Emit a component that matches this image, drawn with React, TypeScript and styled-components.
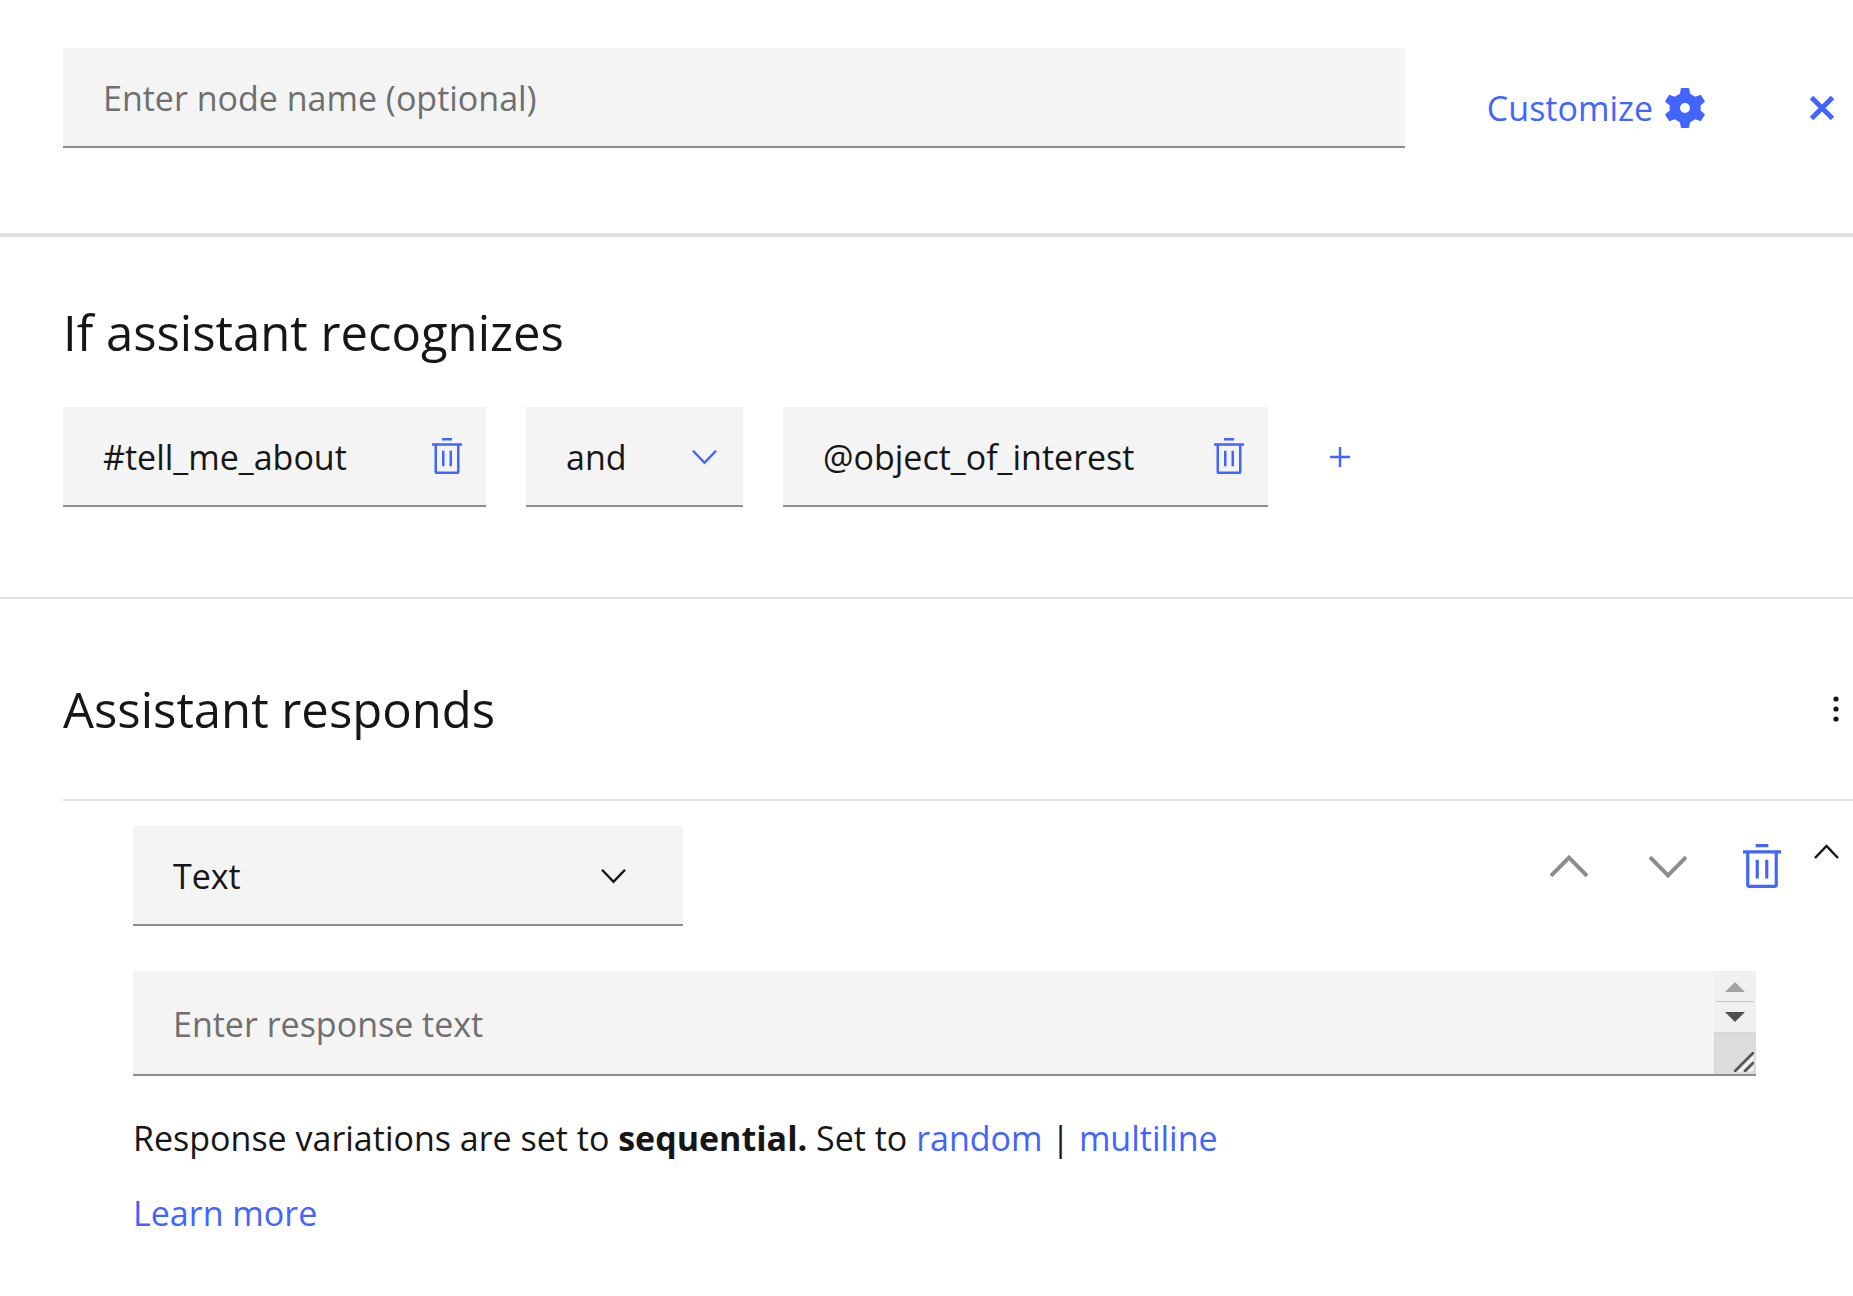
import React, { useState } from 'react';
import styled, { createGlobalStyle } from 'styled-components';

const color = {
  ink: '#161616',
  muted: '#6f6f6f',
  disabled: '#8d8d8d',
  field: '#f4f4f4',
  rule: '#e0e0e0',
  fieldRule: '#8d8d8d',
  action: '#4265ff',
};

const GlobalStyle = createGlobalStyle`
  *, *::before, *::after { box-sizing: border-box; }
  body {
    margin: 0;
    background: #ffffff;
    color: ${color.ink};
    font-family: "Open Sans", "Noto Sans", sans-serif;
    font-size: 34px;
    line-height: 44px;
  }
`;

const Panel = styled.main`
  display: flex;
  flex-direction: column;
`;

const Header = styled.header`
  display: flex;
  align-items: flex-start;
  padding: 48px 11px 65px 63px;
  border-bottom: 4px solid ${color.rule};
`;

const HeaderActions = styled.div`
  display: flex;
  align-items: center;
  gap: 97px;
  height: 120px;
  margin-left: 82px;
`;

const Section = styled.section`
  padding: 63px 0 90px 63px;
  border-bottom: 2px solid ${color.rule};
`;

const ResponseSection = styled.section`
  padding: 0 0 48px 63px;
`;

const SectionHeader = styled.div`
  display: flex;
  align-items: center;
  justify-content: space-between;
  height: 202px;
  padding: 20px 0 0;
  border-bottom: 2px solid ${color.rule};
`;

const Title = styled.h2`
  margin: 0;
  font-size: 49px;
  font-weight: 400;
  line-height: 64px;
`;

const TextField = styled.input`
  flex: 1;
  min-width: 0;
  height: 100px;
  padding: 2px 40px 0;
  border: 0;
  border-bottom: 2px solid ${color.fieldRule};
  border-radius: 0;
  background: ${color.field};
  color: ${color.ink};
  font: inherit;
  outline-color: ${color.action};
  &::placeholder { color: ${color.muted}; opacity: 1; }
`;

const IconButton = styled.button<{ $tone?: string }>`
  display: inline-flex;
  align-items: center;
  justify-content: center;
  flex: none;
  padding: 0;
  border: 0;
  background: none;
  color: ${(p) => p.$tone ?? color.action};
  font: inherit;
  cursor: pointer;
  svg { display: block; }
`;

const CustomizeButton = styled(IconButton)`
  gap: 12px;
`;

const AddButton = styled(IconButton)`
  width: 64px;
  height: 64px;
`;

const Conditions = styled.div`
  display: flex;
  align-items: center;
  gap: 40px;
  margin-top: 43px;
`;

const AddSlot = styled.div`
  display: flex;
`;

const Condition = styled.div<{ $width: number }>`
  display: flex;
  align-items: center;
  width: ${(p) => p.$width}px;
  height: 100px;
  padding-right: 24px;
  border-bottom: 2px solid ${color.fieldRule};
  background: ${color.field};
`;

const ConditionInput = styled.input`
  flex: 1;
  min-width: 0;
  padding: 2px 0 0 40px;
  border: 0;
  background: none;
  color: ${color.ink};
  font: inherit;
`;

const SelectBox = styled.div<{ $width: number; $tone: string; $inset: number }>`
  display: grid;
  align-items: center;
  width: ${(p) => p.$width}px;
  height: 100px;
  border-bottom: 2px solid ${color.fieldRule};
  background: ${color.field};
  color: ${(p) => p.$tone};
  > * { grid-area: 1 / 1; }
  > svg {
    justify-self: end;
    margin-right: ${(p) => p.$inset}px;
    pointer-events: none;
  }
`;

const Select = styled.select`
  appearance: none;
  width: 100%;
  height: 100%;
  padding: 2px 40px 0;
  border: 0;
  border-radius: 0;
  background: none;
  color: ${color.ink};
  font: inherit;
`;

const ResponseBody = styled.div`
  padding: 25px 0 0 70px;
`;

const ResponseToolbar = styled.div`
  display: flex;
  align-items: flex-start;
  justify-content: space-between;
`;

const ToolbarActions = styled.div`
  display: flex;
  align-items: flex-start;
  padding: 15px 14px 0 0;
`;

const ReorderButtons = styled.div`
  display: flex;
  gap: 49px;
  margin-right: 50px;
`;

const ToolButton = styled(IconButton)<{ $width: number }>`
  width: ${(p) => p.$width}px;
  height: 50px;
`;

const Collapse = styled(IconButton)`
  height: 20px;
  margin-left: 33px;
`;

const ResponseField = styled.div`
  display: flex;
  margin: 45px 97px 0 0;
  height: 105px;
  border-bottom: 2px solid ${color.fieldRule};
  background: ${color.field};
`;

const ResponseText = styled.textarea`
  flex: 1;
  min-width: 0;
  padding: 31px 40px 27px;
  border: 0;
  background: none;
  color: ${color.ink};
  font: inherit;
  resize: none;
  overflow: hidden;
  &::placeholder { color: ${color.muted}; opacity: 1; }
`;

const ScrollRail = styled.div`
  display: flex;
  flex-direction: column;
  width: 42px;
  background: #f0f0f0;
`;

const ScrollButton = styled(IconButton)`
  height: 30px;
  padding: 2px 0 0;
  & + & {
    height: 31px;
    margin: 0 2px;
    padding: 0;
    border-top: 1px solid #c1c1c1;
  }
`;

const ResizeCorner = styled.div`
  display: flex;
  flex: 1;
  align-items: flex-end;
  justify-content: flex-end;
  padding: 0 2px 2px 0;
  border: solid #d6d6d6;
  border-width: 1px 0 0 1px;
  background: #dcdcdc;
`;

const Note = styled.p`
  margin: 40px 0 0;
  & + & { margin-top: 31px; }
`;

const Link = styled.a`
  color: ${color.action};
  text-decoration: none;
`;

const Gear = () => (
  <svg width="40" height="40" viewBox="0 0 40 40" fill="currentColor" aria-hidden="true">
    <path
      fillRule="evenodd"
      d="M16 0h8l1.100 5.800 5.200 3 5.500-2L40 13.500l-4.400 3.900v5.200l4.400 3.900-4.200 6.800-5.500-2-5.200 3L24 40h-8l-1.100-5.700-5.200-3-5.500 2L0 26.500l4.700-3.900v-5.200L0 13.500l4.200-6.700 5.500 2 5.200-3zM20 15a5 5 0 1 0 0 10 5 5 0 0 0 0-10z"
    />
  </svg>
);

const Close = () => (
  <svg width="40" height="40" viewBox="0 0 40 40" fill="none" stroke="currentColor" strokeWidth="5" aria-hidden="true">
    <path d="M9.500 9.500 30.500 30.500M30.500 9.500 9.500 30.500" />
  </svg>
);

const Trash = ({ width, height }: { width: number; height: number }) => (
  <svg width={width} height={height} viewBox="0 0 24 28" preserveAspectRatio="none" fill="currentColor" aria-hidden="true">
    <path d="M8 0h8v2H8zM8 10h2v12H8zM14 10h2v12h-2z" />
    <path d="M0 4v2h2v20a2 2 0 0 0 2 2h16a2 2 0 0 0 2-2V6h2V4zm4 22V6h16v20z" />
  </svg>
);

const Chevron = ({ size = 25, up = false, weight = 2.5 }: { size?: number; up?: boolean; weight?: number }) => (
  <svg
    width={size}
    height={size}
    viewBox={`0 0 ${size} ${size}`}
    fill="none"
    stroke="currentColor"
    strokeWidth={weight}
    aria-hidden="true"
  >
    <path
      d={
        up
          ? `M1 ${size * 0.76} L${size / 2} ${size * 0.28} L${size - 1} ${size * 0.76}`
          : `M1 ${size * 0.27} L${size / 2} ${size * 0.75} L${size - 1} ${size * 0.27}`
      }
    />
  </svg>
);

const Plus = () => (
  <svg width="20" height="20" viewBox="0 0 20 20" fill="none" stroke="currentColor" strokeWidth="2.500" aria-hidden="true">
    <path d="M10 0v20M0 10h20" />
  </svg>
);

const Dots = () => (
  <svg width="34" height="26" viewBox="0 0 34 26" fill="currentColor" aria-hidden="true">
    <circle cx="17" cy="3" r="2.600" />
    <circle cx="17" cy="13" r="2.600" />
    <circle cx="17" cy="23" r="2.600" />
  </svg>
);

const Arrow = ({ up = false }: { up?: boolean }) => (
  <svg width="20" height="10" viewBox="0 0 20 10" fill="currentColor" aria-hidden="true">
    <path d={up ? 'M0 10 10 0l10 10z' : 'M0 0h20L10 10z'} />
  </svg>
);

const Grip = () => (
  <svg width="20" height="20" viewBox="0 0 20 20" fill="none" aria-hidden="true">
    <path d="M5 20 20 5M15 20l5-5" stroke="#f3f3f3" strokeWidth="2.500" />
    <path d="M1 19 19 1M11 19l8-8" stroke="#555555" strokeWidth="2.500" strokeLinecap="round" />
  </svg>
);

export default function App() {
  const [name, setName] = useState('');
  const [intent, setIntent] = useState('#tell_me_about');
  const [entity, setEntity] = useState('@object_of_interest');
  const [response, setResponse] = useState('');

  return (
    <>
      <GlobalStyle />
      <Panel>
        <Header>
          <TextField
            aria-label="Node name"
            placeholder="Enter node name (optional)"
            value={name}
            onChange={(e) => setName(e.target.value)}
          />
          <HeaderActions>
            <CustomizeButton type="button">
              Customize
              <Gear />
            </CustomizeButton>
            <IconButton type="button" aria-label="Close">
              <Close />
            </IconButton>
          </HeaderActions>
        </Header>

        <Section>
          <Title>If assistant recognizes</Title>
          <Conditions>
            <Condition $width={423}>
              <ConditionInput aria-label="Intent" value={intent} onChange={(e) => setIntent(e.target.value)} />
              <IconButton type="button" aria-label="Delete intent">
                <Trash width={30} height={36} />
              </IconButton>
            </Condition>
            <SelectBox $width={217} $tone={color.action} $inset={26}>
              <Select aria-label="Operator" defaultValue="and">
                <option>and</option>
                <option>or</option>
              </Select>
              <Chevron />
            </SelectBox>
            <Condition $width={485}>
              <ConditionInput aria-label="Entity" value={entity} onChange={(e) => setEntity(e.target.value)} />
              <IconButton type="button" aria-label="Delete entity">
                <Trash width={30} height={36} />
              </IconButton>
            </Condition>
            <AddSlot>
              <AddButton type="button" aria-label="Add condition">
                <Plus />
              </AddButton>
            </AddSlot>
          </Conditions>
        </Section>

        <ResponseSection>
          <SectionHeader>
            <Title>Assistant responds</Title>
            <IconButton type="button" $tone={color.ink} aria-label="Response options">
              <Dots />
            </IconButton>
          </SectionHeader>

          <ResponseBody>
            <ResponseToolbar>
              <SelectBox $width={550} $tone={color.ink} $inset={57}>
                <Select aria-label="Response type" defaultValue="Text">
                  <option>Text</option>
                  <option>Image</option>
                  <option>Option</option>
                </Select>
                <Chevron />
              </SelectBox>
              <ToolbarActions>
                <ReorderButtons>
                  <ToolButton type="button" $width={50} $tone={color.disabled} aria-label="Move up">
                    <Chevron size={38} up weight={4} />
                  </ToolButton>
                  <ToolButton type="button" $width={50} $tone={color.disabled} aria-label="Move down">
                    <Chevron size={38} weight={4} />
                  </ToolButton>
                </ReorderButtons>
                <ToolButton type="button" $width={38} aria-label="Delete response">
                  <Trash width={38} height={44} />
                </ToolButton>
                <Collapse type="button" $tone={color.ink} aria-label="Collapse response">
                  <Chevron up />
                </Collapse>
              </ToolbarActions>
            </ResponseToolbar>

            <ResponseField>
              <ResponseText
                aria-label="Response text"
                placeholder="Enter response text"
                rows={1}
                value={response}
                onChange={(e) => setResponse(e.target.value)}
              />
              <ScrollRail>
                <ScrollButton type="button" $tone="#a3a3a3" aria-label="Scroll up">
                  <Arrow up />
                </ScrollButton>
                <ScrollButton type="button" $tone="#505050" aria-label="Scroll down">
                  <Arrow />
                </ScrollButton>
                <ResizeCorner>
                  <Grip />
                </ResizeCorner>
              </ScrollRail>
            </ResponseField>

            <Note>
              Response variations are set to <b>sequential.</b> Set to <Link href="#random">random</Link> |{' '}
              <Link href="#multiline">multiline</Link>
            </Note>
            <Note>
              <Link href="#learn-more">Learn more</Link>
            </Note>
          </ResponseBody>
        </ResponseSection>
      </Panel>
    </>
  );
}
